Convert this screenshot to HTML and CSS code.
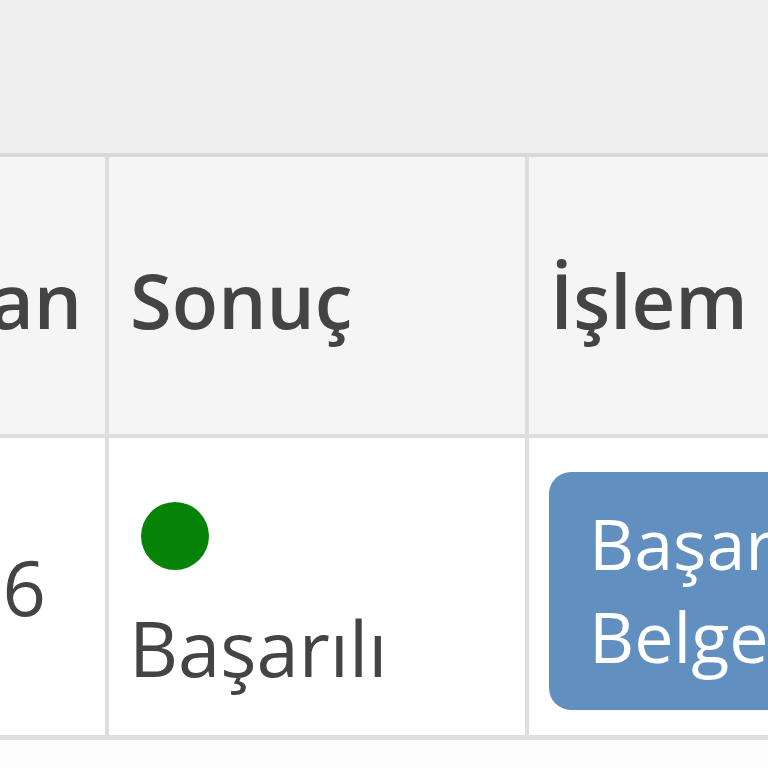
FILE: index.html
```html
<!DOCTYPE html>
<html lang="tr">
<head>
<meta charset="utf-8">
<title>Sonuç</title>
<link rel="stylesheet" href="styles.css">
</head>
<body>
<div class="topbar"></div>
<div class="table">
  <div class="cell head first"><span>Puan</span></div>
  <div class="cell head"><span>Sonuç</span></div>
  <div class="cell head"><span>İşlem</span></div>
  <div class="cell body first num"><span>156</span></div>
  <div class="cell body result">
    <span class="dot"></span>
    <span class="label">Başarılı</span>
  </div>
  <div class="cell body action">
    <button class="btn">Başarılı<br>Belgesi</button>
  </div>
</div>
<div class="below"></div>
</body>
</html>
```

FILE: styles.css
```css
html, body {
  margin: 0;
  padding: 0;
  overflow: hidden;
  width: 768px;
  height: 768px;
  background: #fdfdfd;
  font-family: "Open Sans", "Noto Sans", sans-serif;
  color: #444444;
}

.topbar {
  height: 153px;
  background: #efefef;
  border-bottom: 4px solid #d9d9d9;
}

.table {
  display: grid;
  grid-template-columns: 105px 416px 300px;
  grid-template-rows: 277px 297px;
  column-gap: 4px;
  row-gap: 4px;
  background: #dedede;
  border-bottom: 5px solid #dedede;
  width: 830px;
}

.cell {
  display: flex;
  align-items: center;
  padding-left: 21px;
  overflow: hidden;
  white-space: nowrap;
}

.head {
  background: #f5f5f5;
  font-size: 76px;
  font-weight: 600;
}

.head span {
  position: relative;
  top: 4px;
}

.body {
  background: #ffffff;
  font-size: 76px;
}

.first {
  justify-content: flex-end;
  padding-left: 0;
  padding-right: 23px;
}

.num {
  padding-right: 59px;
}

.result {
  flex-direction: column;
  align-items: flex-start;
  justify-content: flex-start;
  padding-top: 64px;
  padding-left: 20px;
}

.dot {
  width: 68px;
  height: 68px;
  border-radius: 50%;
  background: #078307;
  margin-left: 12px;
}

.label {
  margin-top: 26px;
  line-height: 104px;
}

.action {
  padding-top: 8px;
  padding-left: 20px;
}

.btn {
  font-family: "Open Sans", "Noto Sans", sans-serif;
  font-size: 70px;
  line-height: 93px;
  color: #ffffff;
  background: #6190c0;
  border: none;
  border-radius: 22px;
  padding: 22px 40px 24px 40px;
  text-align: left;
  height: 238px;
  width: 320px;
}
```
